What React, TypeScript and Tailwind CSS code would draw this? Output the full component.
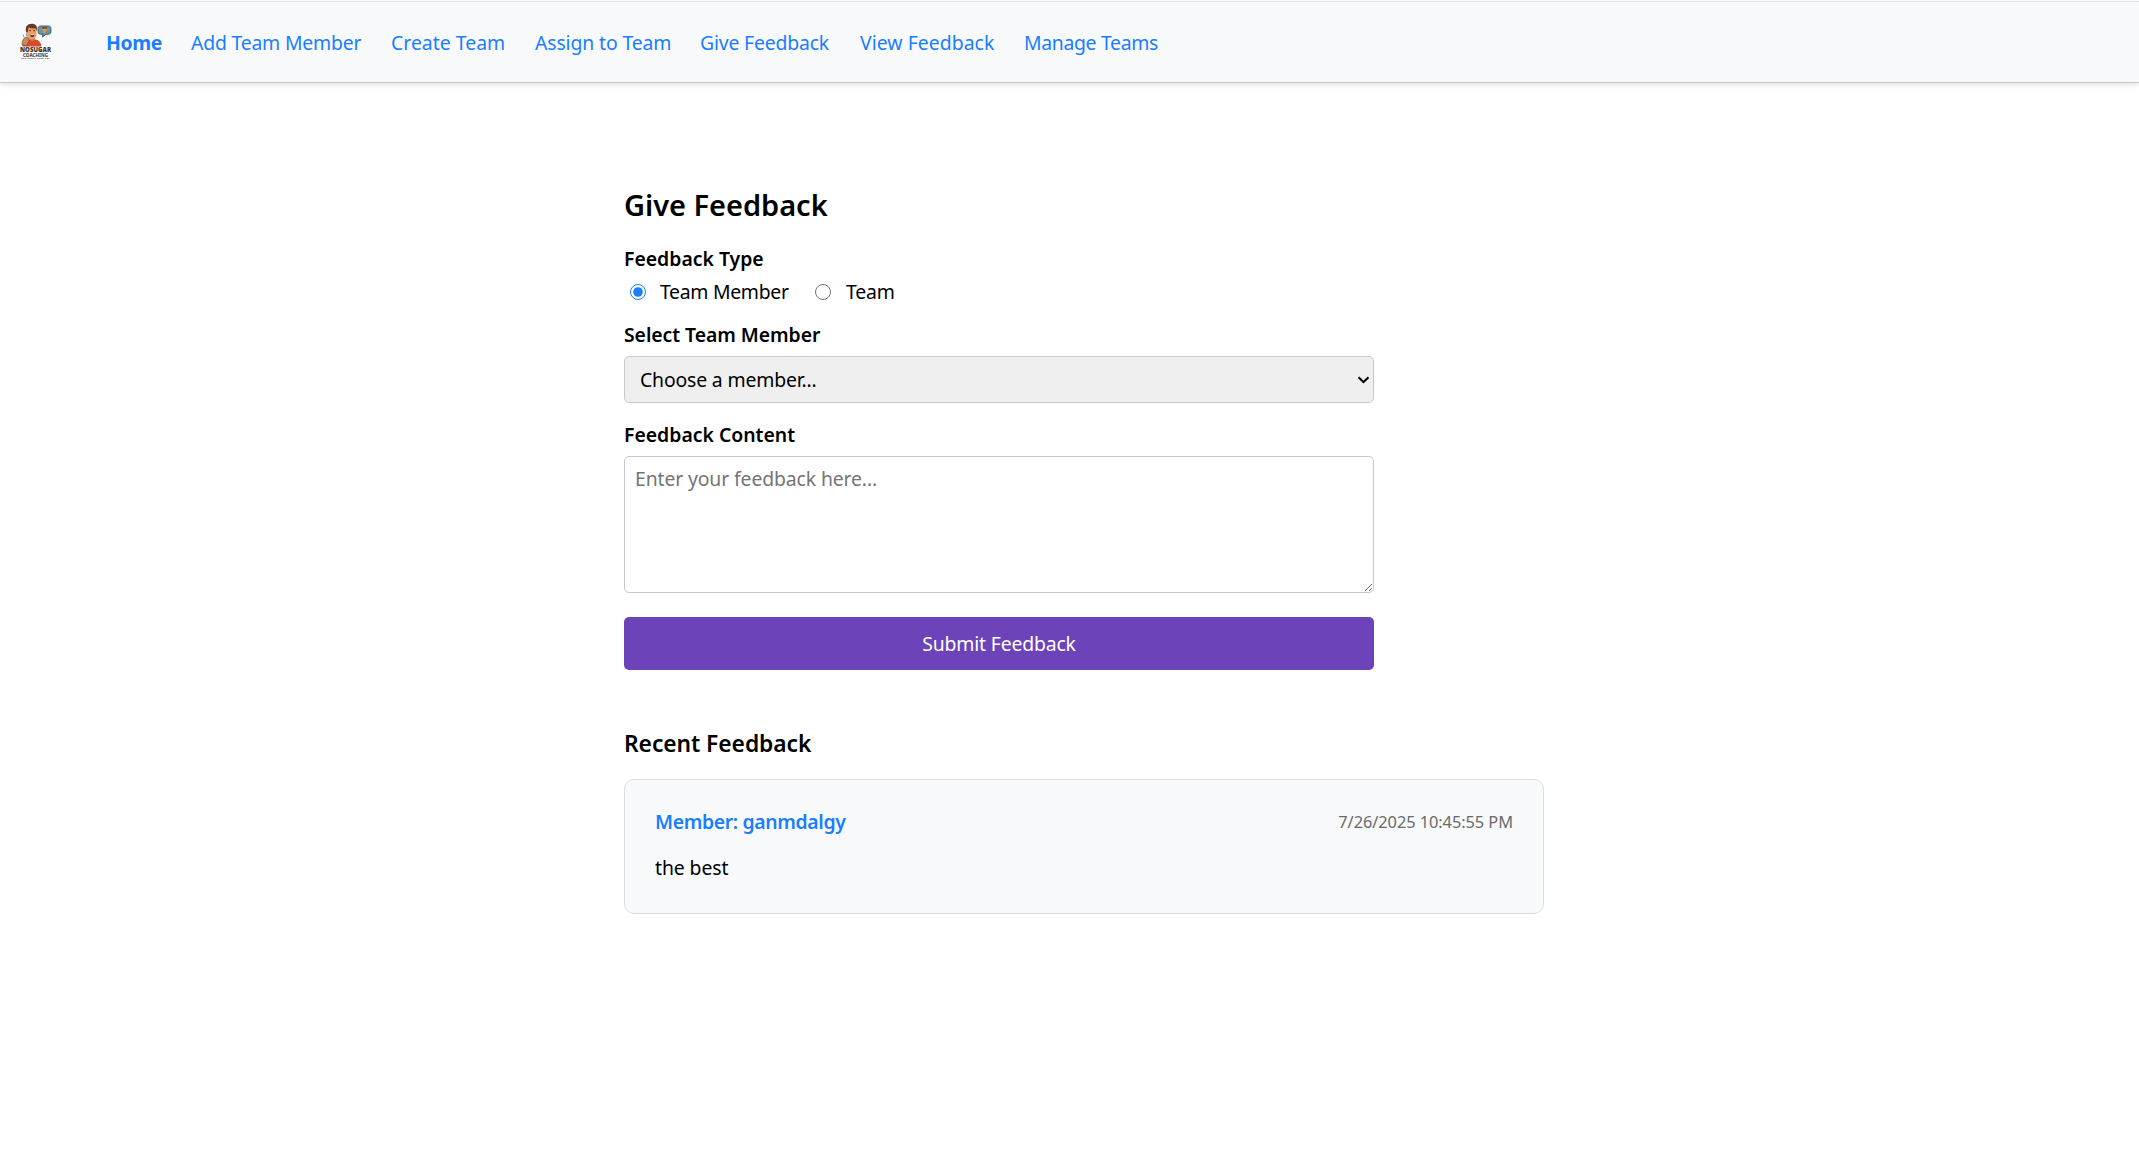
import { useState } from 'react';

const links = [
  { label: 'Home', className: 'w-[55px] font-bold tracking-[-0.4px]' },
  { label: 'Add Team Member', className: 'w-[170px] tracking-[-0.2px]' },
  { label: 'Create Team', className: 'w-[114px] tracking-[0.02px]' },
  { label: 'Assign to Team', className: 'w-[135px] tracking-[-0.125px]' },
  { label: 'Give Feedback', className: 'w-[130px] tracking-[-0.18px]' },
  { label: 'View Feedback', className: 'w-[134px] tracking-[0.04px]' },
  { label: 'Manage Teams', className: 'w-[134px] tracking-[-0.327px]' },
];

function Logo() {
  return (
    <svg width="34" height="40" viewBox="-1 0 34 40" className="shrink-0 overflow-visible" aria-label="Nosugar Coaching">
      <path d="M2.500 23.500c0-4 2-6.500 6-7h7c3.500.5 5.500 3 6 7z" fill="#d9492f" />
      <path d="M9 12.500h6v4l-3 2-3-2z" fill="#c97c48" />
      <path d="M6.800 5h9.700v6.500c0 3-2 4.800-4.800 4.800s-4.900-2-4.900-5z" fill="#e8a069" />
      <path d="M6.200 9.500C4.800 3.500 7.500.8 11.700.8c3.800 0 6.300 2.200 5.200 7.700l-1-3.200c-3 .5-5.300 0-7.300-.8L7.700 9z" fill="#6b3a1e" />
      <path d="M9.100 7.600h1.800M13.300 7.600h1.800" stroke="#3c2415" strokeWidth=".9" />
      <path d="M10 11.200h4.600c-.3 2.200-1.200 2.800-2.300 2.800s-2-.8-2.300-2.800z" fill="#7a1f16" />
      <path d="M10.400 11.200h3.900v.9h-3.900z" fill="#fff" />
      <path d="M2.200 22c-.4-3 .8-6.300 3-7.500l3 .3 1 3-3 5z" fill="#cf8850" stroke="#7b4a2b" strokeWidth=".7" />
      <path d="M4 14.500l-.8-3M6.300 13.500l.2-3" stroke="#9fa5a5" strokeWidth="1.100" />
      <path d="M20.500 3h8c1.600 0 2.400.9 2.400 2.400v3.400c0 1.600-.8 2.400-2.400 2.400H26L22.500 14l.3-2.800h-2.300c-1.600 0-2.400-.8-2.400-2.400V5.400c0-1.500.8-2.400 2.400-2.400z" fill="#6497ab" stroke="#35505b" strokeWidth=".9" />
      <path d="M22.300 4.300h4.700v3.200l-1.500 1v1.700h-1.700V8.500l-1.500-1z" fill="#e39a4f" />
      <path d="M22.300 4.300h4.700v1.300h-4.700z" fill="#4b2d1b" />
      <text x="0" y="29.300" fontSize="7" fontWeight="900" textLength="31" lengthAdjust="spacingAndGlyphs" fill="#43311d">NOSUGAR</text>
      <text x="3" y="33.800" fontSize="4.800" fontWeight="800" textLength="25" lengthAdjust="spacingAndGlyphs" fill="#59462f">COACHING</text>
      <path d="M1.300 35.500H6.500M7.500 35.500h6M14.500 35.500h1.500M17 35.500h7M25 35.500h4.500" stroke="#8f8474" strokeWidth=".9" strokeDasharray="1.300 .4" />
    </svg>
  );
}

export default function App() {
  const [kind, setKind] = useState('member');

  return (
    <div className="min-h-[1170px] bg-white font-['Noto_Sans',sans-serif] text-[19.4px] leading-6 text-black">
      <div className="h-px" />
      <header className="flex h-[82px] items-center border-t border-b border-t-[#dee2e2] border-b-[#c8c9cb] bg-[#f8f9fb] pt-0.5 pl-[19px] shadow-[0_2px_5px_rgba(0,0,0,0.12)]">
        <Logo />
        <nav className="ml-[53px] flex gap-[30px] text-[#1a7eff]">
          {links.map((link) => (
            <a key={link.label} href="#" className={`whitespace-nowrap ${link.className}`}>
              {link.label}
            </a>
          ))}
        </nav>
      </header>

      <main className="ml-[624px] w-[920px] pt-[104px]">
        <form className="flex w-[750px] flex-col" onSubmit={(e) => e.preventDefault()}>
          <h2 className="text-[29px] leading-9 font-semibold tracking-[-0.03px]">Give Feedback</h2>

          <div className="mt-6 font-semibold">Feedback Type</div>
          <div className="mt-[9px] flex items-center">
            <label className="flex items-center">
              <input
                type="radio"
                name="kind"
                checked={kind === 'member'}
                onChange={() => setKind('member')}
                className="ml-[6px] size-4 accent-[#1a7eff]"
              />
              <span className="ml-[14px] w-[129px] whitespace-nowrap tracking-[-0.3px]">Team Member</span>
            </label>
            <label className="ml-[26px] flex items-center">
              <input
                type="radio"
                name="kind"
                checked={kind === 'team'}
                onChange={() => setKind('team')}
                className="size-4 accent-[#1a7eff]"
              />
              <span className="ml-[15px] tracking-[-0.179px]">Team</span>
            </label>
          </div>

          <label className="mt-[19px] font-semibold tracking-[-0.06px]">Select Team Member</label>
          <div className="mt-[9px] grid items-center">
            <select className="col-start-1 row-start-1 h-[47px] appearance-none rounded-[5px] border border-[#c8c9cb] bg-[#efefef] px-[15px] tracking-[-0.161px]">
              <option>Choose a member...</option>
            </select>
            <svg width="13" height="8" viewBox="0 0 13 8" className="pointer-events-none col-start-1 row-start-1 mr-1 justify-self-end">
              <path d="M1.500 1.300l5 4.700 5-4.700" fill="none" stroke="#000" strokeWidth="2.100" />
            </svg>
          </div>

          <label className="mt-5 font-semibold">Feedback Content</label>
          <textarea
            placeholder="Enter your feedback here..."
            className="mt-[9px] h-[137px] resize-y rounded-[5px] border border-[#c8c9cb] bg-white px-[10px] py-[10px] tracking-[-0.125px] placeholder:text-[#757575]"
          />

          <button type="submit" className="mt-6 h-[53px] rounded-[5px] bg-[#6c43b8] tracking-[-0.17px] text-white">
            Submit Feedback
          </button>
        </form>

        <section>
          <h3 className="mt-[60px] text-[22.8px] leading-7 font-semibold tracking-[-0.054px]">Recent Feedback</h3>
          <article className="mt-[21px] h-[135px] rounded-[10px] border border-[#dcddde] bg-[#f8f9fb] px-[30px] pt-[30px]">
            <div className="flex items-center justify-between">
              <strong className="font-semibold tracking-[-0.346px] text-[#1a7eff]">Member: ganmdalgy</strong>
              <time className="text-[16.4px] tracking-[-0.07px] text-[#6a6a6a]">7/26/2025 10:45:55 PM</time>
            </div>
            <p className="mt-[22px] tracking-[-0.1px]">the best</p>
          </article>
        </section>
      </main>
    </div>
  );
}
